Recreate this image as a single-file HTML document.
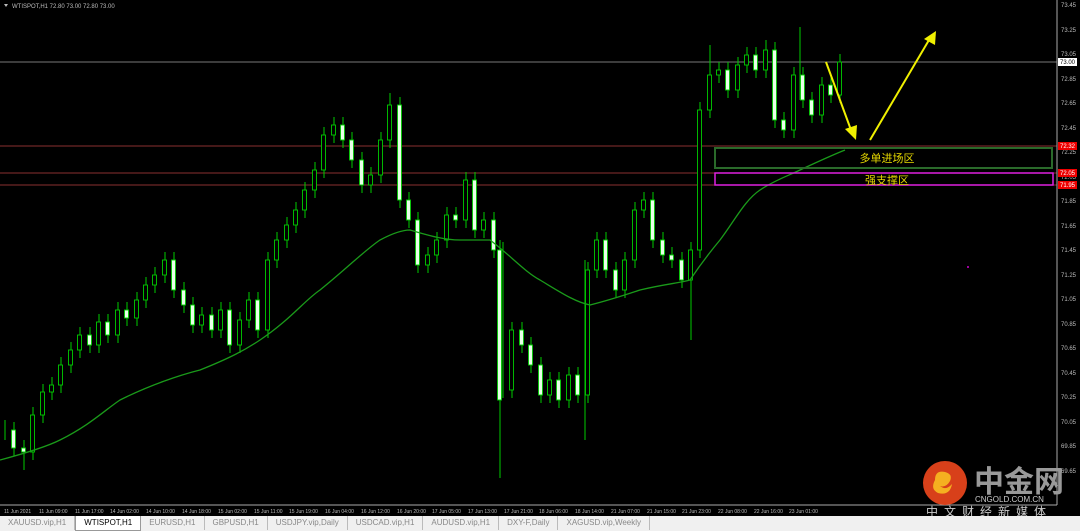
<!DOCTYPE html>
<html><head><meta charset="utf-8"><style>
html,body{margin:0;padding:0;background:#000;width:1080px;height:531px;overflow:hidden;font-family:"Liberation Sans","Noto Sans CJK SC",sans-serif}
svg{position:absolute;left:0;top:0}
.tabs{position:absolute;left:0;top:516px;width:1080px;height:15px;background:#f0f0f0;font-size:8px;color:#888;white-space:nowrap}
.tabs span{display:inline-block;padding:2px 8px 0;border-right:1px solid #bbb;height:12px}
.tabs span.a{background:#fff;color:#000;border:1px solid #999;border-top:none}
</style></head><body>
<svg width="1080" height="516" xmlns="http://www.w3.org/2000/svg" font-family="Liberation Sans, sans-serif">
<g stroke-width="1">
<line x1="0" y1="62" x2="1057" y2="62" stroke="#777"/>
<line x1="0" y1="146" x2="1057" y2="146" stroke="#8a3030"/>
<line x1="0" y1="173" x2="1057" y2="173" stroke="#8a3030"/>
<line x1="0" y1="185" x2="1057" y2="185" stroke="#8a3030"/>
<line x1="1057" y1="0" x2="1057" y2="505" stroke="#aaa"/>
<line x1="0" y1="505" x2="1057" y2="505" stroke="#aaa"/>
</g>
<g fill="#bbb" font-size="6">
<text x="1061" y="7">73.45</text><text x="1061" y="32">73.25</text><text x="1061" y="56">73.05</text><text x="1061" y="81">72.85</text><text x="1061" y="105">72.65</text><text x="1061" y="130">72.45</text><text x="1061" y="154">72.25</text><text x="1061" y="179">72.05</text><text x="1061" y="203">71.85</text><text x="1061" y="228">71.65</text><text x="1061" y="252">71.45</text><text x="1061" y="277">71.25</text><text x="1061" y="301">71.05</text><text x="1061" y="326">70.85</text><text x="1061" y="350">70.65</text><text x="1061" y="375">70.45</text><text x="1061" y="399">70.25</text><text x="1061" y="424">70.05</text><text x="1061" y="448">69.85</text><text x="1061" y="473">69.65</text>
</g>
<rect x="1058" y="58" width="19" height="8" fill="#fff"/><text x="1060" y="64" font-size="6" fill="#000">73.00</text>
<rect x="1058" y="142" width="19" height="8" fill="#e00"/><text x="1060" y="148" font-size="6" fill="#fff">72.32</text>
<rect x="1058" y="169" width="19" height="8" fill="#e00"/><text x="1060" y="175" font-size="6" fill="#fff">72.05</text>
<rect x="1058" y="181" width="19" height="8" fill="#e00"/><text x="1060" y="187" font-size="6" fill="#fff">71.95</text>
<g fill="#bbb" font-size="5">
<text x="4" y="513">11 Jun 2021</text><text x="39" y="513">11 Jun 09:00</text><text x="75" y="513">11 Jun 17:00</text><text x="110" y="513">14 Jun 02:00</text><text x="146" y="513">14 Jun 10:00</text><text x="182" y="513">14 Jun 18:00</text><text x="218" y="513">15 Jun 02:00</text><text x="254" y="513">15 Jun 11:00</text><text x="289" y="513">15 Jun 19:00</text><text x="325" y="513">16 Jun 04:00</text><text x="361" y="513">16 Jun 12:00</text><text x="397" y="513">16 Jun 20:00</text><text x="432" y="513">17 Jun 05:00</text><text x="468" y="513">17 Jun 13:00</text><text x="504" y="513">17 Jun 21:00</text><text x="539" y="513">18 Jun 06:00</text><text x="575" y="513">18 Jun 14:00</text><text x="611" y="513">21 Jun 07:00</text><text x="647" y="513">21 Jun 15:00</text><text x="682" y="513">21 Jun 23:00</text><text x="718" y="513">22 Jun 08:00</text><text x="754" y="513">22 Jun 16:00</text><text x="789" y="513">23 Jun 01:00</text>
</g>
<path d="M4 4 L8 4 L6 7Z" fill="#bbb"/>
<text x="12" y="8" font-size="6" fill="#bbb">WTISPOT,H1  72.80 73.00 72.80 73.00</text>
<path stroke="#0c0" stroke-width="1" fill="none" d="
M5 420V440 M14 422V456 M24 440V470 M33 407V460 M43 384V423 M52 377V400 M61 357V393 M71 342V373 M80 327V358 M90 327V353 M99 314V353 M108 314V343 M118 302V343 M127 302V326 M137 292V326 M146 277V308 M155 267V293 M165 252V283 M174 252V298 M184 282V313 M193 297V333 M202 307V333 M212 307V338 M221 302V338 M230 302V353 M240 312V353 M249 292V328 M258 292V338 M268 252V338 M277 232V268 M287 217V248 M296 202V233 M305 182V218 M315 162V198 M324 127V178 M334 117V143 M343 117V148 M352 132V168 M362 152V193 M371 167V193 M381 132V183 M390 93V148 M400 97V208 M409 192V228 M418 212V273 M428 247V273 M437 232V263 M447 207V248 M456 207V228 M466 172V228 M475 172V238 M484 212V238 M494 212V258 M500 240V478 M503 242V398 M512 322V398 M522 322V353 M531 337V373 M541 357V403 M550 372V403 M559 372V408 M569 367V408 M578 367V403 M585 260V440 M588 262V403 M597 232V278 M606 232V278 M616 262V298 M625 252V298 M635 202V268 M644 192V218 M653 192V248 M663 232V263 M672 247V268 M682 252V288 M691 242V340 M700 102V258 M710 45V118 M719 62V83 M728 62V98 M738 57V98 M747 47V73 M756 47V78 M766 40V78 M775 42V128 M784 112V138 M794 67V138 M800 27V100 M803 67V108 M812 92V123 M822 77V123 M831 77V103 M840 54V103"/>
<g fill="#000" stroke="#0c0" stroke-width="0.9">
<rect x="30.5" y="415" width="4" height="37"/><rect x="40.5" y="392" width="4" height="23"/><rect x="49.5" y="385" width="4" height="7"/><rect x="58.5" y="365" width="4" height="20"/><rect x="68.5" y="350" width="4" height="15"/><rect x="77.5" y="335" width="4" height="15"/><rect x="96.5" y="322" width="4" height="23"/><rect x="115.5" y="310" width="4" height="25"/><rect x="134.5" y="300" width="4" height="18"/><rect x="143.5" y="285" width="4" height="15"/><rect x="152.5" y="275" width="4" height="10"/><rect x="162.5" y="260" width="4" height="15"/><rect x="199.5" y="315" width="4" height="10"/><rect x="218.5" y="310" width="4" height="20"/><rect x="237.5" y="320" width="4" height="25"/><rect x="246.5" y="300" width="4" height="20"/><rect x="265.5" y="260" width="4" height="70"/><rect x="274.5" y="240" width="4" height="20"/><rect x="284.5" y="225" width="4" height="15"/><rect x="293.5" y="210" width="4" height="15"/><rect x="302.5" y="190" width="4" height="20"/><rect x="312.5" y="170" width="4" height="20"/><rect x="321.5" y="135" width="4" height="35"/><rect x="331.5" y="125" width="4" height="10"/><rect x="368.5" y="175" width="4" height="10"/><rect x="378.5" y="140" width="4" height="35"/><rect x="387.5" y="105" width="4" height="35"/><rect x="425.5" y="255" width="4" height="10"/><rect x="434.5" y="240" width="4" height="15"/><rect x="444.5" y="215" width="4" height="25"/><rect x="463.5" y="180" width="4" height="40"/><rect x="481.5" y="220" width="4" height="10"/><rect x="509.5" y="330" width="4" height="60"/><rect x="547.5" y="380" width="4" height="15"/><rect x="566.5" y="375" width="4" height="25"/><rect x="585.5" y="270" width="4" height="125"/><rect x="594.5" y="240" width="4" height="30"/><rect x="622.5" y="260" width="4" height="30"/><rect x="632.5" y="210" width="4" height="50"/><rect x="641.5" y="200" width="4" height="10"/><rect x="688.5" y="250" width="4" height="30"/><rect x="697.5" y="110" width="4" height="140"/><rect x="707.5" y="75" width="4" height="35"/><rect x="716.5" y="70" width="4" height="5"/><rect x="735.5" y="65" width="4" height="25"/><rect x="744.5" y="55" width="4" height="10"/><rect x="763.5" y="50" width="4" height="20"/><rect x="791.5" y="75" width="4" height="55"/><rect x="819.5" y="85" width="4" height="30"/><rect x="837.5" y="62" width="4" height="33"/>
</g>
<g fill="#e8ffe8" stroke="#0c0" stroke-width="0.9">
<rect x="11.5" y="430" width="4" height="18"/><rect x="21.5" y="448" width="4" height="4"/><rect x="87.5" y="335" width="4" height="10"/><rect x="105.5" y="322" width="4" height="13"/><rect x="124.5" y="310" width="4" height="8"/><rect x="171.5" y="260" width="4" height="30"/><rect x="181.5" y="290" width="4" height="15"/><rect x="190.5" y="305" width="4" height="20"/><rect x="209.5" y="315" width="4" height="15"/><rect x="227.5" y="310" width="4" height="35"/><rect x="255.5" y="300" width="4" height="30"/><rect x="340.5" y="125" width="4" height="15"/><rect x="349.5" y="140" width="4" height="20"/><rect x="359.5" y="160" width="4" height="25"/><rect x="397.5" y="105" width="4" height="95"/><rect x="406.5" y="200" width="4" height="20"/><rect x="415.5" y="220" width="4" height="45"/><rect x="453.5" y="215" width="4" height="5"/><rect x="472.5" y="180" width="4" height="50"/><rect x="491.5" y="220" width="4" height="30"/><rect x="497.5" y="250" width="4" height="150"/><rect x="519.5" y="330" width="4" height="15"/><rect x="528.5" y="345" width="4" height="20"/><rect x="538.5" y="365" width="4" height="30"/><rect x="556.5" y="380" width="4" height="20"/><rect x="575.5" y="375" width="4" height="20"/><rect x="603.5" y="240" width="4" height="30"/><rect x="613.5" y="270" width="4" height="20"/><rect x="650.5" y="200" width="4" height="40"/><rect x="660.5" y="240" width="4" height="15"/><rect x="669.5" y="255" width="4" height="5"/><rect x="679.5" y="260" width="4" height="20"/><rect x="725.5" y="70" width="4" height="20"/><rect x="753.5" y="55" width="4" height="15"/><rect x="772.5" y="50" width="4" height="70"/><rect x="781.5" y="120" width="4" height="10"/><rect x="800.5" y="75" width="4" height="25"/><rect x="809.5" y="100" width="4" height="15"/><rect x="828.5" y="85" width="4" height="10"/>
</g>
<path d="M0 460 C30 452 50 445 60 440 C90 425 105 410 120 400 C150 385 180 375 200 370 C230 358 245 350 260 340 C290 320 305 300 320 290 C345 270 365 250 380 240 C395 232 405 230 410 230 C430 236 445 240 460 240 L490 240 C510 255 525 272 540 280 C560 292 575 302 590 305 C610 300 625 295 640 290 C665 284 680 283 690 280 C700 265 710 252 720 240 C735 220 745 200 760 190 C775 180 790 175 800 170 C815 163 830 156 845 150" fill="none" stroke="#1a9a1a" stroke-width="1.3"/>
<rect x="715" y="148" width="337" height="20" fill="none" stroke="#2a6a2a" stroke-width="2"/>
<text x="887" y="162" font-size="11" fill="#e6d800" text-anchor="middle" font-family="Noto Sans CJK SC, sans-serif">多单进场区</text>
<rect x="715" y="173" width="338" height="12" fill="none" stroke="#e020e0" stroke-width="1.5"/>
<text x="887" y="184" font-size="11" fill="#e6d800" text-anchor="middle" font-family="Noto Sans CJK SC, sans-serif">强支撑区</text>
<line x1="826" y1="62" x2="851" y2="130" stroke="#f0f000" stroke-width="2"/>
<path d="M845 129 L856 140 L857 125Z" fill="#f0f000"/>
<line x1="870" y1="140" x2="929" y2="40" stroke="#f0f000" stroke-width="2"/>
<path d="M924 39 L936 31 L935 45Z" fill="#f0f000"/>
<circle cx="968" cy="267" r="1" fill="#c0c"/>
<circle cx="945" cy="483" r="22" fill="#d8401a"/>
<path d="M935 480 q0 -10 10 -8 q8 2 5 9 q-4 7 -10 5 q6 5 12 -2 q-2 12 -14 9 q-8 -4 -3 -13z" fill="#f5b020"/>
<text x="974" y="492" font-size="30" font-weight="bold" fill="#999" font-family="Noto Sans CJK SC, sans-serif">中金网</text>
<text x="975" y="502" font-size="8" fill="#ccc">CNGOLD.COM.CN</text>
<text x="926" y="516" font-size="12" fill="#ccc" letter-spacing="6" font-family="Noto Sans CJK SC, sans-serif">中文财经新媒体</text>
</svg>
<div class="tabs"><span>XAUUSD.vip,H1</span><span class="a">WTISPOT,H1</span><span>EURUSD,H1</span><span>GBPUSD,H1</span><span>USDJPY.vip,Daily</span><span>USDCAD.vip,H1</span><span>AUDUSD.vip,H1</span><span>DXY-F,Daily</span><span>XAGUSD.vip,Weekly</span></div>
</body></html>
